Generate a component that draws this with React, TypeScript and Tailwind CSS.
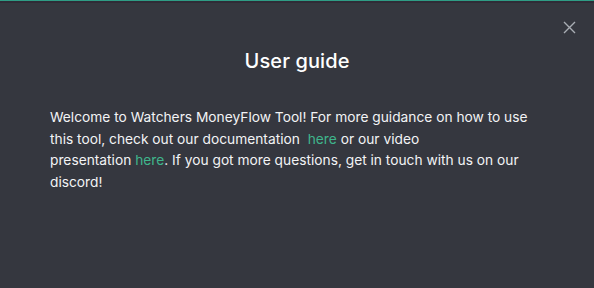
export default function App() {
  return (
    <div className="w-[594px] h-[288px] bg-[#35373f] border-t border-[#2f9c85] relative font-['Inter',sans-serif] text-white">
      <div className="h-[2px] bg-[#2f2c37]" />
      <button className="absolute right-[18px] top-[20px] w-[13px] h-[13px] text-[#a9adb4]">
        <svg viewBox="0 0 13 13" className="w-[13px] h-[13px]" fill="none" stroke="currentColor" strokeWidth="1.4">
          <path d="M1 1 L12 12 M12 1 L1 12" />
        </svg>
      </button>
      <div className="pt-[44px] px-[50px]">
        <h2 className="text-center text-[20px] leading-[28px] font-medium tracking-[0.1px]">User guide</h2>
        <p className="mt-[32px] text-[13.75px] leading-[21.7px] text-[#f2f3f5] whitespace-nowrap">
          Welcome to Watchers MoneyFlow Tool! For more guidance on how to use
          <br />
          this tool, check out our documentation{" "}
          <a className="text-[#3fb58c] ml-[4px]">here</a> or our video
          <br />
          presentation <a className="text-[#3fb58c]">here</a>. If you got more questions, get in touch with us on our
          <br />
          discord!
        </p>
      </div>
    </div>
  );
}
